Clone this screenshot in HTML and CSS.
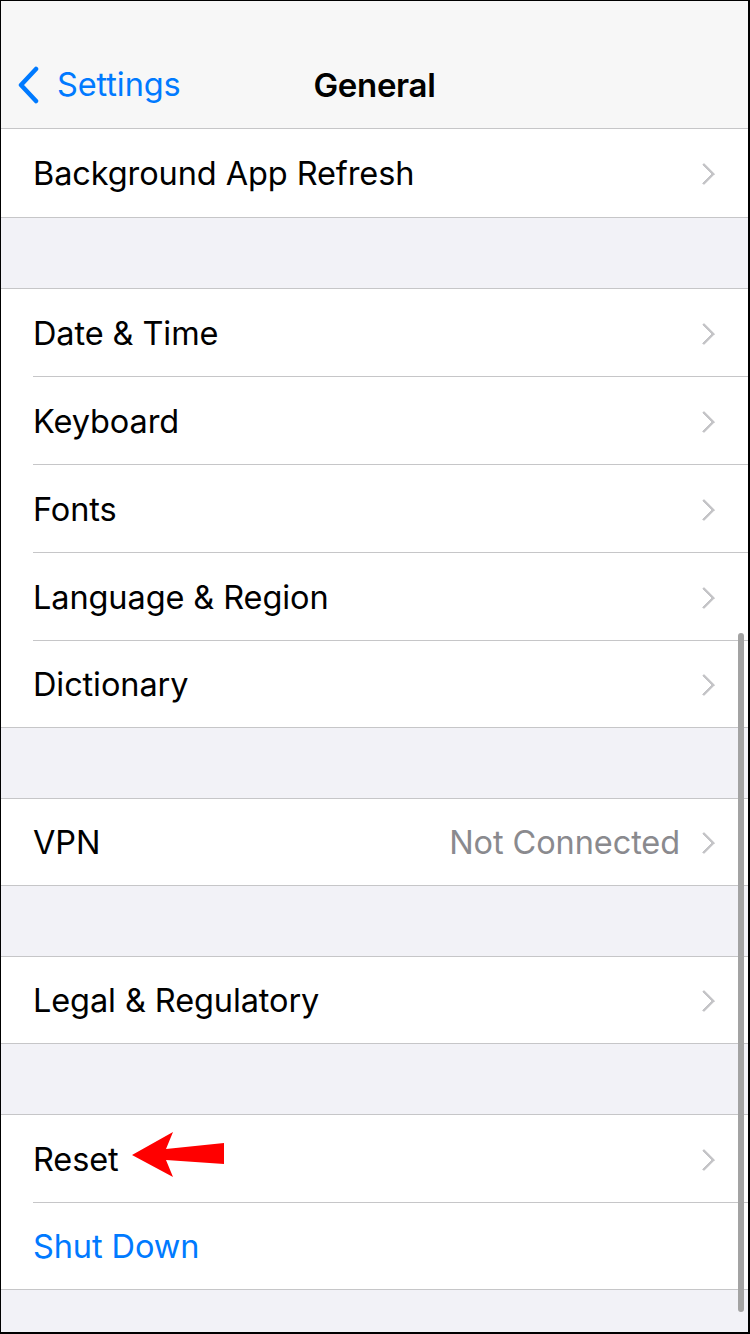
FILE: index.html
```html
<!DOCTYPE html>
<html lang="en">
    <head>
        <meta charset="UTF-8" />
        <meta name="viewport" content="width=device-width, initial-scale=1.0" />
        <title>General</title>
        <link rel="stylesheet" href="styles.css">
    </head>
    <body>
        <div class="screen">
            <div class="nav">
                <div class="nav-bar">
                    <a class="back" href="#">
                        <svg class="back-icon" width="24" height="38" viewBox="0 0 24 38">
                            <path d="M20 3 L5 19 L20 35" fill="none" stroke="#007aff" stroke-width="4.5" stroke-linecap="round" stroke-linejoin="round" />
                        </svg>
                        <span>Settings</span>
                    </a>
                    <div class="title">General</div>
                </div>
            </div>

            <div class="group first">
                <div class="row"><div class="row-inner"><span class="label">Background App Refresh</span><span class="chevron"></span></div></div>
            </div>

            <div class="group">
                <div class="row"><div class="row-inner"><span class="label">Date &amp; Time</span><span class="chevron"></span></div></div>
                <div class="row"><div class="row-inner"><span class="label">Keyboard</span><span class="chevron"></span></div></div>
                <div class="row"><div class="row-inner"><span class="label">Fonts</span><span class="chevron"></span></div></div>
                <div class="row"><div class="row-inner"><span class="label">Language &amp; Region</span><span class="chevron"></span></div></div>
                <div class="row"><div class="row-inner"><span class="label">Dictionary</span><span class="chevron"></span></div></div>
            </div>

            <div class="group">
                <div class="row"><div class="row-inner"><span class="label">VPN</span><span class="value">Not Connected</span><span class="chevron"></span></div></div>
            </div>

            <div class="group">
                <div class="row"><div class="row-inner"><span class="label">Legal &amp; Regulatory</span><span class="chevron"></span></div></div>
            </div>

            <div class="group">
                <div class="row">
                    <div class="row-inner"><span class="label">Reset</span><span class="chevron"></span></div>
                    <!-- annotation arrow pointing at Reset -->
                    <svg class="arrow" width="96" height="48" viewBox="0 0 96 48">
                        <polygon points="0,23 41,0 34,17 92,11 92,32 34,28 41,45" fill="#ff0000" />
                    </svg>
                </div>
                <div class="row"><div class="row-inner"><span class="label action">Shut Down</span></div></div>
            </div>

            <div class="scrollbar"></div>
        </div>
    </body>
</html>
```

FILE: styles.css
```css
* {
    box-sizing: border-box;
}
html,
body {
    margin: 0;
    padding: 0;
}
body {
    font-family: Inter, "Noto Sans", sans-serif;
    color: #000;
    background: #f2f2f7;
}
.screen {
    position: relative;
    width: 750px;
    height: 1334px;
    overflow: hidden;
    background: #f2f2f7;
    border-top: 1px solid #000;
    border-left: 1px solid #000;
    border-right: 2px solid #000;
    border-bottom: 2px solid #000;
}
.nav {
    background: #f7f7f7;
    padding-top: 40px;
    border-bottom: 1px solid #c6c6c8;
}
.nav-bar {
    position: relative;
    height: 87px;
    display: flex;
    align-items: center;
    justify-content: center;
}
.back {
    position: absolute;
    left: 15px;
    top: 0;
    bottom: 0;
    display: flex;
    align-items: center;
    gap: 17px;
    color: #007aff;
    text-decoration: none;
    font-size: 32.5px;
    letter-spacing: -0.1px;
}
.back span {
    margin-top: 0;
}
.title {
    font-size: 33px;
    font-weight: 600;
    letter-spacing: -0.3px;
}
.group {
    margin-top: 70px;
    background: #fff;
    border-top: 1px solid #c6c6c8;
    border-bottom: 1px solid #c6c6c8;
}
.group.first {
    margin-top: 0;
    border-top: none;
}
.row {
    position: relative;
    padding-left: 32px;
}
.row-inner {
    height: 88px;
    display: flex;
    align-items: center;
    padding-right: 32px;
    border-bottom: 1px solid #c6c6c8;
}
.row:last-child .row-inner {
    height: 86px;
    border-bottom: none;
}
.group.first .row:last-child .row-inner {
    height: 88px;
}
.label {
    flex: 1;
    font-size: 32.5px;
    letter-spacing: -0.1px;
    margin-top: 1px;
}
.label.action {
    color: #007aff;
}
.value {
    font-size: 32.5px;
    color: #8a8a8e;
    letter-spacing: -0.1px;
    margin-right: 22px;
    margin-top: 1px;
}
.chevron {
    width: 14px;
    height: 22px;
    position: relative;
}
.chevron::before {
    content: "";
    position: absolute;
    right: 4px;
    top: 4px;
    width: 13px;
    height: 13px;
    border-top: 3px solid #c4c4c7;
    border-right: 3px solid #c4c4c7;
    transform: rotate(45deg);
    border-radius: 1px;
}
.arrow {
    position: absolute;
    left: 131px;
    top: 17px;
}
.scrollbar {
    position: absolute;
    left: 737px;
    top: 632px;
    width: 6px;
    height: 679px;
    border-radius: 3px;
    background: #a3a3a3;
}
```
